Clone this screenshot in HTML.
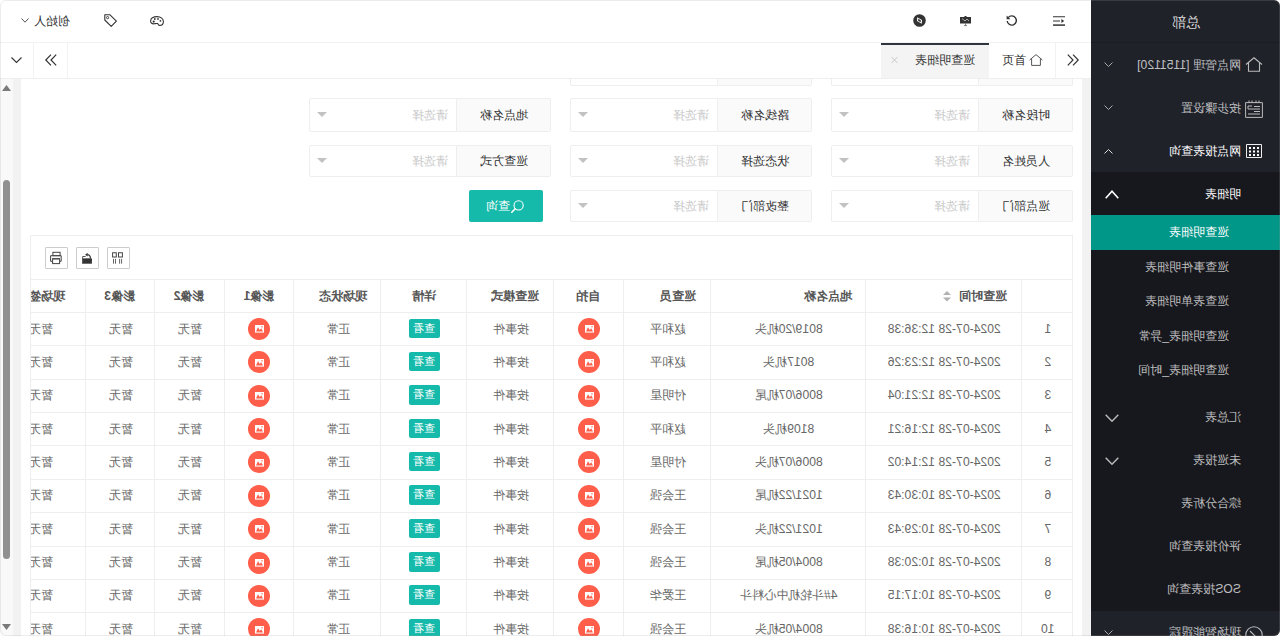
<!DOCTYPE html>
<html><head><meta charset="utf-8">
<style>
html,body{margin:0;padding:0;background:#fff;overflow:hidden;}
body{width:1280px;height:636px;}
#root{position:relative;width:1280px;height:636px;overflow:hidden;transform:scaleX(-1);font-family:"Liberation Sans",sans-serif;font-size:12.2px;color:#333;background:#fff;}
.a{position:absolute;white-space:nowrap;}
svg{position:absolute;overflow:visible;}
/* sidebar */
#side{position:absolute;left:0;top:0;width:189px;height:636px;background:#20222a;overflow:hidden;}
#side .t{position:absolute;white-space:nowrap;color:rgba(255,255,255,.72);line-height:16px;}
#sub{position:absolute;left:0;top:172px;width:189px;height:438.5px;background:#17181d;}
#act{position:absolute;left:0;top:215px;width:189px;height:34.5px;background:#009688;}
/* header */
#hdr{position:absolute;left:189px;top:0;width:1091px;height:42px;background:#fff;border-bottom:1px solid #f2f2f2;}
#tabs{position:absolute;left:189px;top:43px;width:1091px;height:35px;background:#fff;border-bottom:1px solid #eee;}
#main{position:absolute;left:189px;top:79px;width:1091px;height:557px;background:#f2f2f2;}
</style></head><body>
<div id="root">
 <div id="side">
  <div class="a" style="left:0;top:0;width:189px;height:42px;border-bottom:1px solid #1b1d23;"></div>
  <div class="t" style="left:0;width:189px;text-align:center;top:14.5px;color:#dcdcdc;font-size:13.6px;">总部</div>
  <!-- item1 -->
  <svg style="left:17px;top:57px" width="18" height="15" viewBox="0 0 18 15"><path d="M1 7.5 L9 0.8 L17 7.5 M3.5 5.5 V14.3 H14.5 V5.5" fill="none" stroke="#bbb" stroke-width="1.1"/></svg>
  <div class="t" style="left:39px;top:57px;">网点管理 [1151120]</div>
  <svg style="left:167px;top:62px" width="9" height="5" viewBox="0 0 9 5"><path d="M0.5 0.5 L4.5 4.5 L8.5 0.5" fill="none" stroke="#aaa" stroke-width="1"/></svg>
  <!-- item2 -->
  <svg style="left:17px;top:100px" width="18" height="18" viewBox="0 0 18 18"><path d="M0.6 2.6 H17.4 V17.4 H0.6 Z M4 0.5 V3 M7 0.5 V3 M11 0.5 V3 M14 0.5 V3 M3 6.5 H9 M3 9 H15 M3 11.5 H9 M3 14 H15 M11 6 H15 V9" fill="none" stroke="#bbb" stroke-width="1"/></svg>
  <div class="t" style="left:39px;top:100px;">按步骤设置</div>
  <svg style="left:167px;top:105px" width="9" height="5" viewBox="0 0 9 5"><path d="M0.5 0.5 L4.5 4.5 L8.5 0.5" fill="none" stroke="#aaa" stroke-width="1"/></svg>
  <!-- item3 -->
  <svg style="left:18px;top:144px" width="16" height="14" viewBox="0 0 16 14"><path d="M0.5 0.5 H15.5 V13.5 H0.5 Z" fill="none" stroke="#eee" stroke-width="1"/><g fill="#fff"><rect x="3" y="3" width="2" height="2"/><rect x="7" y="3" width="2" height="2"/><rect x="11" y="3" width="2" height="2"/><rect x="3" y="6.5" width="2" height="2"/><rect x="7" y="6.5" width="2" height="2"/><rect x="11" y="6.5" width="2" height="2"/><rect x="3" y="10" width="2" height="2"/><rect x="7" y="10" width="2" height="2"/><rect x="11" y="10" width="2" height="2"/></g></svg>
  <div class="t" style="left:39px;top:143px;color:#fff;">网点报表查询</div>
  <svg style="left:167px;top:149px" width="9" height="5" viewBox="0 0 9 5"><path d="M0.5 4.5 L4.5 0.5 L8.5 4.5" fill="none" stroke="#ddd" stroke-width="1"/></svg>
  <div id="sub"></div>
  <div class="t" style="left:39px;top:186px;color:#fff;">明细表</div>
  <svg style="left:161px;top:190px" width="14" height="9" viewBox="0 0 14 9"><path d="M0.7 8.3 L7 1.2 L13.3 8.3" fill="none" stroke="#fff" stroke-width="1.6"/></svg>
  <div id="act"></div>
  <div class="t" style="left:51px;top:224px;color:#fff;">巡查明细表</div>
  <div class="t" style="left:51px;top:259px;">巡查事件明细表</div>
  <div class="t" style="left:51px;top:293px;">巡查表单明细表</div>
  <div class="t" style="left:51px;top:328px;">巡查明细表_异常</div>
  <div class="t" style="left:51px;top:362px;">巡查明细表_时间</div>
  <div class="t" style="left:39px;top:409px;">汇总表</div>
  <svg style="left:161px;top:414px" width="14" height="8" viewBox="0 0 14 8"><path d="M0.7 0.7 L7 7.3 L13.3 0.7" fill="none" stroke="#bbb" stroke-width="1.4"/></svg>
  <div class="t" style="left:39px;top:452px;">未巡报表</div>
  <svg style="left:161px;top:457px" width="14" height="8" viewBox="0 0 14 8"><path d="M0.7 0.7 L7 7.3 L13.3 0.7" fill="none" stroke="#bbb" stroke-width="1.4"/></svg>
  <div class="t" style="left:39px;top:495px;">综合分析表</div>
  <div class="t" style="left:39px;top:538px;">评价报表查询</div>
  <div class="t" style="left:39px;top:581px;">SOS报表查询</div>
  <svg style="left:17px;top:626px" width="18" height="18" viewBox="0 0 18 18"><circle cx="9" cy="9" r="8.2" fill="none" stroke="#bbb" stroke-width="1.1"/><path d="M13 5 L5 13" stroke="#bbb" stroke-width="1.1"/></svg>
  <div class="t" style="left:39px;top:624px;">现场智能跟踪</div>
  <svg style="left:167px;top:630px" width="9" height="5" viewBox="0 0 9 5"><path d="M0.5 0.5 L4.5 4.5 L8.5 0.5" fill="none" stroke="#aaa" stroke-width="1"/></svg>
 </div>
 <div id="main"></div><!--MAIN--><div class="a" style="left:189px;top:79px;width:1091px;height:557px;background:#f2f2f2;"></div><div class="a" style="left:198px;top:79px;width:1061px;height:557px;background:#fff;"></div><div class="a" style="left:1267px;top:79px;width:13px;height:557px;background:#f9f9f9;"></div><div class="a" style="left:1270px;top:180px;width:7px;height:379px;background:#909090;border-radius:4px;"></div><svg style="left:1269px;top:85px" width="9" height="6" viewBox="0 0 9 6"><path d="M4.5 0 L9 6 H0 Z" fill="#7a7a7a"/></svg><svg style="left:1269px;top:624px" width="9" height="6" viewBox="0 0 9 6"><path d="M0 0 H9 L4.5 6 Z" fill="#7a7a7a"/></svg><div class="a" style="left:206.5px;top:52px;width:93.5px;height:32px;background:#fafafa;border:1px solid #eee;border-right:none;border-radius:2px 0 0 2px;"></div><div class="a" style="left:301.0px;top:52px;width:146px;height:32px;background:#fff;border:1px solid #eee;border-radius:0 2px 2px 0;"></div><div class="a" style="left:467.5px;top:52px;width:93.5px;height:32px;background:#fafafa;border:1px solid #eee;border-right:none;border-radius:2px 0 0 2px;"></div><div class="a" style="left:562.0px;top:52px;width:146px;height:32px;background:#fff;border:1px solid #eee;border-radius:0 2px 2px 0;"></div><div class="a" style="left:206.5px;top:98px;width:93.5px;height:32px;background:#fafafa;border:1px solid #eee;border-right:none;border-radius:2px 0 0 2px;"></div><div class="a" style="left:301.0px;top:98px;width:146px;height:32px;background:#fff;border:1px solid #eee;border-radius:0 2px 2px 0;"></div><div class="a" style="left:206.5px;top:107.0px;width:94.5px;text-align:center;line-height:16px;color:#333;">时段名称</div><div class="a" style="left:310.5px;top:107.0px;line-height:16px;color:#c9c9c9;">请选择</div><svg style="left:431.0px;top:112.0px" width="10" height="5" viewBox="0 0 10 5"><path d="M0 0 H10 L5 5 Z" fill="#c2c2c2"/></svg><div class="a" style="left:467.5px;top:98px;width:93.5px;height:32px;background:#fafafa;border:1px solid #eee;border-right:none;border-radius:2px 0 0 2px;"></div><div class="a" style="left:562.0px;top:98px;width:146px;height:32px;background:#fff;border:1px solid #eee;border-radius:0 2px 2px 0;"></div><div class="a" style="left:467.5px;top:107.0px;width:94.5px;text-align:center;line-height:16px;color:#333;">路线名称</div><div class="a" style="left:571.5px;top:107.0px;line-height:16px;color:#c9c9c9;">请选择</div><svg style="left:692.0px;top:112.0px" width="10" height="5" viewBox="0 0 10 5"><path d="M0 0 H10 L5 5 Z" fill="#c2c2c2"/></svg><div class="a" style="left:728.5px;top:98px;width:93.5px;height:32px;background:#fafafa;border:1px solid #eee;border-right:none;border-radius:2px 0 0 2px;"></div><div class="a" style="left:823.0px;top:98px;width:146px;height:32px;background:#fff;border:1px solid #eee;border-radius:0 2px 2px 0;"></div><div class="a" style="left:728.5px;top:107.0px;width:94.5px;text-align:center;line-height:16px;color:#333;">地点名称</div><div class="a" style="left:832.5px;top:107.0px;line-height:16px;color:#c9c9c9;">请选择</div><svg style="left:953.0px;top:112.0px" width="10" height="5" viewBox="0 0 10 5"><path d="M0 0 H10 L5 5 Z" fill="#c2c2c2"/></svg><div class="a" style="left:206.5px;top:144.5px;width:93.5px;height:30px;background:#fafafa;border:1px solid #eee;border-right:none;border-radius:2px 0 0 2px;"></div><div class="a" style="left:301.0px;top:144.5px;width:146px;height:30px;background:#fff;border:1px solid #eee;border-radius:0 2px 2px 0;"></div><div class="a" style="left:206.5px;top:152.5px;width:94.5px;text-align:center;line-height:16px;color:#333;">人员姓名</div><div class="a" style="left:310.5px;top:152.5px;line-height:16px;color:#c9c9c9;">请选择</div><svg style="left:431.0px;top:157.5px" width="10" height="5" viewBox="0 0 10 5"><path d="M0 0 H10 L5 5 Z" fill="#c2c2c2"/></svg><div class="a" style="left:467.5px;top:144.5px;width:93.5px;height:30px;background:#fafafa;border:1px solid #eee;border-right:none;border-radius:2px 0 0 2px;"></div><div class="a" style="left:562.0px;top:144.5px;width:146px;height:30px;background:#fff;border:1px solid #eee;border-radius:0 2px 2px 0;"></div><div class="a" style="left:467.5px;top:152.5px;width:94.5px;text-align:center;line-height:16px;color:#333;">状态选择</div><div class="a" style="left:571.5px;top:152.5px;line-height:16px;color:#c9c9c9;">请选择</div><svg style="left:692.0px;top:157.5px" width="10" height="5" viewBox="0 0 10 5"><path d="M0 0 H10 L5 5 Z" fill="#c2c2c2"/></svg><div class="a" style="left:728.5px;top:144.5px;width:93.5px;height:30px;background:#fafafa;border:1px solid #eee;border-right:none;border-radius:2px 0 0 2px;"></div><div class="a" style="left:823.0px;top:144.5px;width:146px;height:30px;background:#fff;border:1px solid #eee;border-radius:0 2px 2px 0;"></div><div class="a" style="left:728.5px;top:152.5px;width:94.5px;text-align:center;line-height:16px;color:#333;">巡查方式</div><div class="a" style="left:832.5px;top:152.5px;line-height:16px;color:#c9c9c9;">请选择</div><svg style="left:953.0px;top:157.5px" width="10" height="5" viewBox="0 0 10 5"><path d="M0 0 H10 L5 5 Z" fill="#c2c2c2"/></svg><div class="a" style="left:206.5px;top:190.2px;width:93.5px;height:29.6px;background:#fafafa;border:1px solid #eee;border-right:none;border-radius:2px 0 0 2px;"></div><div class="a" style="left:301.0px;top:190.2px;width:146px;height:29.6px;background:#fff;border:1px solid #eee;border-radius:0 2px 2px 0;"></div><div class="a" style="left:206.5px;top:198.0px;width:94.5px;text-align:center;line-height:16px;color:#333;">巡点部门</div><div class="a" style="left:310.5px;top:198.0px;line-height:16px;color:#c9c9c9;">请选择</div><svg style="left:431.0px;top:203.0px" width="10" height="5" viewBox="0 0 10 5"><path d="M0 0 H10 L5 5 Z" fill="#c2c2c2"/></svg><div class="a" style="left:467.5px;top:190.2px;width:93.5px;height:29.6px;background:#fafafa;border:1px solid #eee;border-right:none;border-radius:2px 0 0 2px;"></div><div class="a" style="left:562.0px;top:190.2px;width:146px;height:29.6px;background:#fff;border:1px solid #eee;border-radius:0 2px 2px 0;"></div><div class="a" style="left:467.5px;top:198.0px;width:94.5px;text-align:center;line-height:16px;color:#333;">整改部门</div><div class="a" style="left:571.5px;top:198.0px;line-height:16px;color:#c9c9c9;">请选择</div><svg style="left:692.0px;top:203.0px" width="10" height="5" viewBox="0 0 10 5"><path d="M0 0 H10 L5 5 Z" fill="#c2c2c2"/></svg><div class="a" style="left:737px;top:190px;width:74px;height:32px;background:#16baaa;border-radius:2px;"></div><svg style="left:755.5px;top:200px" width="13" height="13" viewBox="0 0 13 13"><circle cx="5.4" cy="5.4" r="4.6" fill="none" stroke="#fff" stroke-width="1.1"/><path d="M8.8 8.8 L12.2 12.2" stroke="#fff" stroke-width="1.6" stroke-linecap="round"/></svg><div class="a" style="left:770px;top:198px;line-height:16px;color:#fff;">查询</div><div class="a" style="left:206.5px;top:235px;width:1043.5px;height:401px;overflow:hidden;"><div class="a" style="left:0;top:0;width:1100px;height:1px;background:#eee;"></div><div class="a" style="left:0;top:0;width:1px;height:401px;background:#eee;"></div><div class="a" style="left:1042.5px;top:0;width:1px;height:401px;background:#eee;z-index:2;"></div><div class="a" style="left:943.8px;top:12px;width:21px;height:20px;border:1px solid #ccc;border-radius:1px;"></div><div class="a" style="left:974.75px;top:12px;width:21px;height:20px;border:1px solid #ccc;border-radius:1px;"></div><div class="a" style="left:1005.7px;top:12px;width:21px;height:20px;border:1px solid #ccc;border-radius:1px;"></div><svg style="left:1010.5px;top:15px" width="14" height="15" viewBox="0 0 14 15"><g transform="translate(14,0) scale(-1,1)"><rect x="3.9" y="2.3" width="7.2" height="3.4" fill="none" stroke="#444" stroke-width="1"/><path d="M3.4 11.3 H1.6 V5.7 H12.2 V11.3 H10.6" fill="none" stroke="#444" stroke-width="1"/><rect x="3.6" y="8.6" width="7" height="5" fill="none" stroke="#444" stroke-width="1"/><path d="M3.6 8.9 H10.6" stroke="#555" stroke-width="1.3"/></g></svg><svg style="left:979.5px;top:16px" width="13" height="13" viewBox="0 0 13 13"><g transform="translate(13,0) scale(-1,1)"><path d="M1.2 7.4 H10.9 V12.7 H1.2 Z" fill="#333"/><path d="M1.7 12.5 V5.5 H4.6" fill="none" stroke="#555" stroke-width="1"/><path d="M4.4 8.3 H9.7 L10.9 9.3" fill="none" stroke="#333" stroke-width="1"/><path d="M9.4 7.6 C9.4 4.8 8.2 3.7 6.3 3.7" fill="none" stroke="#333" stroke-width="1.2"/><path d="M4.1 3.7 L6.6 1.8 L6.6 5.6 Z" fill="#333"/></g></svg><svg style="left:949.5px;top:16px" width="13" height="14" viewBox="0 0 13 14"><g transform="translate(13,0) scale(-1,1)"><rect x="1.6" y="1.75" width="3.7" height="4.25" fill="none" stroke="#444" stroke-width="1"/><rect x="7.5" y="1.75" width="3.9" height="4.25" fill="none" stroke="#444" stroke-width="1"/><path d="M2.5 7.9 V12.7 M4.5 7.9 V12.7 M8.6 7.9 V12.7 M10.6 7.9 V12.7" stroke="#555" stroke-width="0.9"/></g></svg><div class="a" style="left:0;top:44px;width:1100px;height:1px;background:#eee;"></div><div class="a" style="left:0;top:77.00px;width:1100px;height:1px;background:#eee;"></div><div class="a" style="left:0;top:110.36px;width:1100px;height:1px;background:#eee;"></div><div class="a" style="left:0;top:143.72px;width:1100px;height:1px;background:#eee;"></div><div class="a" style="left:0;top:177.08px;width:1100px;height:1px;background:#eee;"></div><div class="a" style="left:0;top:210.44px;width:1100px;height:1px;background:#eee;"></div><div class="a" style="left:0;top:243.80px;width:1100px;height:1px;background:#eee;"></div><div class="a" style="left:0;top:277.16px;width:1100px;height:1px;background:#eee;"></div><div class="a" style="left:0;top:310.52px;width:1100px;height:1px;background:#eee;"></div><div class="a" style="left:0;top:343.88px;width:1100px;height:1px;background:#eee;"></div><div class="a" style="left:0;top:377.24px;width:1100px;height:1px;background:#eee;"></div><div class="a" style="left:0;top:410.60px;width:1100px;height:1px;background:#eee;"></div><div class="a" style="left:51.60px;top:44px;width:1px;height:400px;background:#eee;"></div><div class="a" style="left:207.00px;top:44px;width:1px;height:400px;background:#eee;"></div><div class="a" style="left:362.70px;top:44px;width:1px;height:400px;background:#eee;"></div><div class="a" style="left:449.20px;top:44px;width:1px;height:400px;background:#eee;"></div><div class="a" style="left:519.20px;top:44px;width:1px;height:400px;background:#eee;"></div><div class="a" style="left:606.40px;top:44px;width:1px;height:400px;background:#eee;"></div><div class="a" style="left:692.10px;top:44px;width:1px;height:400px;background:#eee;"></div><div class="a" style="left:779.30px;top:44px;width:1px;height:400px;background:#eee;"></div><div class="a" style="left:848.70px;top:44px;width:1px;height:400px;background:#eee;"></div><div class="a" style="left:918.30px;top:44px;width:1px;height:400px;background:#eee;"></div><div class="a" style="left:987.70px;top:44px;width:1px;height:400px;background:#eee;"></div><div class="a" style="left:66.20px;top:53px;line-height:16px;color:#555;font-weight:bold;">巡查时间</div><div class="a" style="left:222.00px;top:53px;line-height:16px;color:#555;font-weight:bold;">地点名称</div><div class="a" style="left:377.80px;top:53px;line-height:16px;color:#555;font-weight:bold;">巡查员</div><div class="a" style="left:474.00px;top:53px;line-height:16px;color:#555;font-weight:bold;">自拍</div><div class="a" style="left:534.25px;top:53px;line-height:16px;color:#555;font-weight:bold;">巡查模式</div><div class="a" style="left:638.00px;top:53px;line-height:16px;color:#555;font-weight:bold;">详情</div><div class="a" style="left:706.60px;top:53px;line-height:16px;color:#555;font-weight:bold;">现场状态</div><div class="a" style="left:799.10px;top:53px;line-height:16px;color:#555;font-weight:bold;">影像1</div><div class="a" style="left:869.10px;top:53px;line-height:16px;color:#555;font-weight:bold;">影像2</div><div class="a" style="left:938.40px;top:53px;line-height:16px;color:#555;font-weight:bold;">影像3</div><div class="a" style="left:1008.10px;top:53px;line-height:16px;color:#555;font-weight:bold;">现场签名</div><svg style="left:122.40px;top:56px" width="8" height="11" viewBox="0 0 8 11"><path d="M4 0 L8 4 H0 Z M0 6.5 H8 L4 10.5 Z" fill="#b2b2b2"/></svg><div class="a" style="left:-0.10px;top:85.50px;width:51.70px;text-align:center;line-height:16px;color:#666;">1</div><div class="a" style="left:51.60px;top:85.50px;width:155.40px;text-align:center;line-height:16px;color:#666;">2024-07-28 12:36:38</div><div class="a" style="left:207.00px;top:85.50px;width:155.70px;text-align:center;line-height:16px;color:#666;">8019/20机头</div><div class="a" style="left:362.70px;top:85.50px;width:86.50px;text-align:center;line-height:16px;color:#666;">赵和平</div><div class="a" style="left:473.20px;top:83.00px;width:22px;height:22px;border-radius:50%;background:#ff5f4a;"></div><svg style="left:479.70px;top:90.30px" width="9" height="8" viewBox="0 0 9 8"><rect x="0" y="0" width="9" height="7.6" fill="#fff"/><path d="M1 6.6 L2.8 3.2 L4.2 5 L6 2.2 L8 6.6 Z" fill="#ff5f4a"/><circle cx="2" cy="1.8" r="0.7" fill="#ff5f4a"/></svg><div class="a" style="left:803.00px;top:83.00px;width:22px;height:22px;border-radius:50%;background:#ff5f4a;"></div><svg style="left:809.50px;top:90.30px" width="9" height="8" viewBox="0 0 9 8"><rect x="0" y="0" width="9" height="7.6" fill="#fff"/><path d="M1 6.6 L2.8 3.2 L4.2 5 L6 2.2 L8 6.6 Z" fill="#ff5f4a"/><circle cx="2" cy="1.8" r="0.7" fill="#ff5f4a"/></svg><div class="a" style="left:519.20px;top:85.50px;width:87.20px;text-align:center;line-height:16px;color:#666;">按事件</div><div class="a" style="left:633.75px;top:83.50px;width:31px;height:19.5px;background:#16baaa;border-radius:2px;color:#fff;font-size:11px;line-height:19.5px;text-align:center;">查看</div><div class="a" style="left:692.10px;top:85.50px;width:87.20px;text-align:center;line-height:16px;color:#666;">正常</div><div class="a" style="left:848.70px;top:85.50px;width:69.60px;text-align:center;line-height:16px;color:#666;">暂无</div><div class="a" style="left:918.30px;top:85.50px;width:69.40px;text-align:center;line-height:16px;color:#666;">暂无</div><div class="a" style="left:987.70px;top:85.50px;width:89.80px;text-align:center;line-height:16px;color:#666;">暂无</div><div class="a" style="left:-0.10px;top:118.86px;width:51.70px;text-align:center;line-height:16px;color:#666;">2</div><div class="a" style="left:51.60px;top:118.86px;width:155.40px;text-align:center;line-height:16px;color:#666;">2024-07-28 12:23:26</div><div class="a" style="left:207.00px;top:118.86px;width:155.70px;text-align:center;line-height:16px;color:#666;">8017机头</div><div class="a" style="left:362.70px;top:118.86px;width:86.50px;text-align:center;line-height:16px;color:#666;">赵和平</div><div class="a" style="left:473.20px;top:116.36px;width:22px;height:22px;border-radius:50%;background:#ff5f4a;"></div><svg style="left:479.70px;top:123.66px" width="9" height="8" viewBox="0 0 9 8"><rect x="0" y="0" width="9" height="7.6" fill="#fff"/><path d="M1 6.6 L2.8 3.2 L4.2 5 L6 2.2 L8 6.6 Z" fill="#ff5f4a"/><circle cx="2" cy="1.8" r="0.7" fill="#ff5f4a"/></svg><div class="a" style="left:803.00px;top:116.36px;width:22px;height:22px;border-radius:50%;background:#ff5f4a;"></div><svg style="left:809.50px;top:123.66px" width="9" height="8" viewBox="0 0 9 8"><rect x="0" y="0" width="9" height="7.6" fill="#fff"/><path d="M1 6.6 L2.8 3.2 L4.2 5 L6 2.2 L8 6.6 Z" fill="#ff5f4a"/><circle cx="2" cy="1.8" r="0.7" fill="#ff5f4a"/></svg><div class="a" style="left:519.20px;top:118.86px;width:87.20px;text-align:center;line-height:16px;color:#666;">按事件</div><div class="a" style="left:633.75px;top:116.86px;width:31px;height:19.5px;background:#16baaa;border-radius:2px;color:#fff;font-size:11px;line-height:19.5px;text-align:center;">查看</div><div class="a" style="left:692.10px;top:118.86px;width:87.20px;text-align:center;line-height:16px;color:#666;">正常</div><div class="a" style="left:848.70px;top:118.86px;width:69.60px;text-align:center;line-height:16px;color:#666;">暂无</div><div class="a" style="left:918.30px;top:118.86px;width:69.40px;text-align:center;line-height:16px;color:#666;">暂无</div><div class="a" style="left:987.70px;top:118.86px;width:89.80px;text-align:center;line-height:16px;color:#666;">暂无</div><div class="a" style="left:-0.10px;top:152.22px;width:51.70px;text-align:center;line-height:16px;color:#666;">3</div><div class="a" style="left:51.60px;top:152.22px;width:155.40px;text-align:center;line-height:16px;color:#666;">2024-07-28 12:21:04</div><div class="a" style="left:207.00px;top:152.22px;width:155.70px;text-align:center;line-height:16px;color:#666;">8006/07机尾</div><div class="a" style="left:362.70px;top:152.22px;width:86.50px;text-align:center;line-height:16px;color:#666;">付明星</div><div class="a" style="left:473.20px;top:149.72px;width:22px;height:22px;border-radius:50%;background:#ff5f4a;"></div><svg style="left:479.70px;top:157.02px" width="9" height="8" viewBox="0 0 9 8"><rect x="0" y="0" width="9" height="7.6" fill="#fff"/><path d="M1 6.6 L2.8 3.2 L4.2 5 L6 2.2 L8 6.6 Z" fill="#ff5f4a"/><circle cx="2" cy="1.8" r="0.7" fill="#ff5f4a"/></svg><div class="a" style="left:803.00px;top:149.72px;width:22px;height:22px;border-radius:50%;background:#ff5f4a;"></div><svg style="left:809.50px;top:157.02px" width="9" height="8" viewBox="0 0 9 8"><rect x="0" y="0" width="9" height="7.6" fill="#fff"/><path d="M1 6.6 L2.8 3.2 L4.2 5 L6 2.2 L8 6.6 Z" fill="#ff5f4a"/><circle cx="2" cy="1.8" r="0.7" fill="#ff5f4a"/></svg><div class="a" style="left:519.20px;top:152.22px;width:87.20px;text-align:center;line-height:16px;color:#666;">按事件</div><div class="a" style="left:633.75px;top:150.22px;width:31px;height:19.5px;background:#16baaa;border-radius:2px;color:#fff;font-size:11px;line-height:19.5px;text-align:center;">查看</div><div class="a" style="left:692.10px;top:152.22px;width:87.20px;text-align:center;line-height:16px;color:#666;">正常</div><div class="a" style="left:848.70px;top:152.22px;width:69.60px;text-align:center;line-height:16px;color:#666;">暂无</div><div class="a" style="left:918.30px;top:152.22px;width:69.40px;text-align:center;line-height:16px;color:#666;">暂无</div><div class="a" style="left:987.70px;top:152.22px;width:89.80px;text-align:center;line-height:16px;color:#666;">暂无</div><div class="a" style="left:-0.10px;top:185.58px;width:51.70px;text-align:center;line-height:16px;color:#666;">4</div><div class="a" style="left:51.60px;top:185.58px;width:155.40px;text-align:center;line-height:16px;color:#666;">2024-07-28 12:16:21</div><div class="a" style="left:207.00px;top:185.58px;width:155.70px;text-align:center;line-height:16px;color:#666;">8109机头</div><div class="a" style="left:362.70px;top:185.58px;width:86.50px;text-align:center;line-height:16px;color:#666;">赵和平</div><div class="a" style="left:473.20px;top:183.08px;width:22px;height:22px;border-radius:50%;background:#ff5f4a;"></div><svg style="left:479.70px;top:190.38px" width="9" height="8" viewBox="0 0 9 8"><rect x="0" y="0" width="9" height="7.6" fill="#fff"/><path d="M1 6.6 L2.8 3.2 L4.2 5 L6 2.2 L8 6.6 Z" fill="#ff5f4a"/><circle cx="2" cy="1.8" r="0.7" fill="#ff5f4a"/></svg><div class="a" style="left:803.00px;top:183.08px;width:22px;height:22px;border-radius:50%;background:#ff5f4a;"></div><svg style="left:809.50px;top:190.38px" width="9" height="8" viewBox="0 0 9 8"><rect x="0" y="0" width="9" height="7.6" fill="#fff"/><path d="M1 6.6 L2.8 3.2 L4.2 5 L6 2.2 L8 6.6 Z" fill="#ff5f4a"/><circle cx="2" cy="1.8" r="0.7" fill="#ff5f4a"/></svg><div class="a" style="left:519.20px;top:185.58px;width:87.20px;text-align:center;line-height:16px;color:#666;">按事件</div><div class="a" style="left:633.75px;top:183.58px;width:31px;height:19.5px;background:#16baaa;border-radius:2px;color:#fff;font-size:11px;line-height:19.5px;text-align:center;">查看</div><div class="a" style="left:692.10px;top:185.58px;width:87.20px;text-align:center;line-height:16px;color:#666;">正常</div><div class="a" style="left:848.70px;top:185.58px;width:69.60px;text-align:center;line-height:16px;color:#666;">暂无</div><div class="a" style="left:918.30px;top:185.58px;width:69.40px;text-align:center;line-height:16px;color:#666;">暂无</div><div class="a" style="left:987.70px;top:185.58px;width:89.80px;text-align:center;line-height:16px;color:#666;">暂无</div><div class="a" style="left:-0.10px;top:218.94px;width:51.70px;text-align:center;line-height:16px;color:#666;">5</div><div class="a" style="left:51.60px;top:218.94px;width:155.40px;text-align:center;line-height:16px;color:#666;">2024-07-28 12:14:02</div><div class="a" style="left:207.00px;top:218.94px;width:155.70px;text-align:center;line-height:16px;color:#666;">8006/07机头</div><div class="a" style="left:362.70px;top:218.94px;width:86.50px;text-align:center;line-height:16px;color:#666;">付明星</div><div class="a" style="left:473.20px;top:216.44px;width:22px;height:22px;border-radius:50%;background:#ff5f4a;"></div><svg style="left:479.70px;top:223.74px" width="9" height="8" viewBox="0 0 9 8"><rect x="0" y="0" width="9" height="7.6" fill="#fff"/><path d="M1 6.6 L2.8 3.2 L4.2 5 L6 2.2 L8 6.6 Z" fill="#ff5f4a"/><circle cx="2" cy="1.8" r="0.7" fill="#ff5f4a"/></svg><div class="a" style="left:803.00px;top:216.44px;width:22px;height:22px;border-radius:50%;background:#ff5f4a;"></div><svg style="left:809.50px;top:223.74px" width="9" height="8" viewBox="0 0 9 8"><rect x="0" y="0" width="9" height="7.6" fill="#fff"/><path d="M1 6.6 L2.8 3.2 L4.2 5 L6 2.2 L8 6.6 Z" fill="#ff5f4a"/><circle cx="2" cy="1.8" r="0.7" fill="#ff5f4a"/></svg><div class="a" style="left:519.20px;top:218.94px;width:87.20px;text-align:center;line-height:16px;color:#666;">按事件</div><div class="a" style="left:633.75px;top:216.94px;width:31px;height:19.5px;background:#16baaa;border-radius:2px;color:#fff;font-size:11px;line-height:19.5px;text-align:center;">查看</div><div class="a" style="left:692.10px;top:218.94px;width:87.20px;text-align:center;line-height:16px;color:#666;">正常</div><div class="a" style="left:848.70px;top:218.94px;width:69.60px;text-align:center;line-height:16px;color:#666;">暂无</div><div class="a" style="left:918.30px;top:218.94px;width:69.40px;text-align:center;line-height:16px;color:#666;">暂无</div><div class="a" style="left:987.70px;top:218.94px;width:89.80px;text-align:center;line-height:16px;color:#666;">暂无</div><div class="a" style="left:-0.10px;top:252.30px;width:51.70px;text-align:center;line-height:16px;color:#666;">6</div><div class="a" style="left:51.60px;top:252.30px;width:155.40px;text-align:center;line-height:16px;color:#666;">2024-07-28 10:30:43</div><div class="a" style="left:207.00px;top:252.30px;width:155.70px;text-align:center;line-height:16px;color:#666;">1021/22机尾</div><div class="a" style="left:362.70px;top:252.30px;width:86.50px;text-align:center;line-height:16px;color:#666;">王会强</div><div class="a" style="left:473.20px;top:249.80px;width:22px;height:22px;border-radius:50%;background:#ff5f4a;"></div><svg style="left:479.70px;top:257.10px" width="9" height="8" viewBox="0 0 9 8"><rect x="0" y="0" width="9" height="7.6" fill="#fff"/><path d="M1 6.6 L2.8 3.2 L4.2 5 L6 2.2 L8 6.6 Z" fill="#ff5f4a"/><circle cx="2" cy="1.8" r="0.7" fill="#ff5f4a"/></svg><div class="a" style="left:803.00px;top:249.80px;width:22px;height:22px;border-radius:50%;background:#ff5f4a;"></div><svg style="left:809.50px;top:257.10px" width="9" height="8" viewBox="0 0 9 8"><rect x="0" y="0" width="9" height="7.6" fill="#fff"/><path d="M1 6.6 L2.8 3.2 L4.2 5 L6 2.2 L8 6.6 Z" fill="#ff5f4a"/><circle cx="2" cy="1.8" r="0.7" fill="#ff5f4a"/></svg><div class="a" style="left:519.20px;top:252.30px;width:87.20px;text-align:center;line-height:16px;color:#666;">按事件</div><div class="a" style="left:633.75px;top:250.30px;width:31px;height:19.5px;background:#16baaa;border-radius:2px;color:#fff;font-size:11px;line-height:19.5px;text-align:center;">查看</div><div class="a" style="left:692.10px;top:252.30px;width:87.20px;text-align:center;line-height:16px;color:#666;">正常</div><div class="a" style="left:848.70px;top:252.30px;width:69.60px;text-align:center;line-height:16px;color:#666;">暂无</div><div class="a" style="left:918.30px;top:252.30px;width:69.40px;text-align:center;line-height:16px;color:#666;">暂无</div><div class="a" style="left:987.70px;top:252.30px;width:89.80px;text-align:center;line-height:16px;color:#666;">暂无</div><div class="a" style="left:-0.10px;top:285.66px;width:51.70px;text-align:center;line-height:16px;color:#666;">7</div><div class="a" style="left:51.60px;top:285.66px;width:155.40px;text-align:center;line-height:16px;color:#666;">2024-07-28 10:29:43</div><div class="a" style="left:207.00px;top:285.66px;width:155.70px;text-align:center;line-height:16px;color:#666;">1021/22机头</div><div class="a" style="left:362.70px;top:285.66px;width:86.50px;text-align:center;line-height:16px;color:#666;">王会强</div><div class="a" style="left:473.20px;top:283.16px;width:22px;height:22px;border-radius:50%;background:#ff5f4a;"></div><svg style="left:479.70px;top:290.46px" width="9" height="8" viewBox="0 0 9 8"><rect x="0" y="0" width="9" height="7.6" fill="#fff"/><path d="M1 6.6 L2.8 3.2 L4.2 5 L6 2.2 L8 6.6 Z" fill="#ff5f4a"/><circle cx="2" cy="1.8" r="0.7" fill="#ff5f4a"/></svg><div class="a" style="left:803.00px;top:283.16px;width:22px;height:22px;border-radius:50%;background:#ff5f4a;"></div><svg style="left:809.50px;top:290.46px" width="9" height="8" viewBox="0 0 9 8"><rect x="0" y="0" width="9" height="7.6" fill="#fff"/><path d="M1 6.6 L2.8 3.2 L4.2 5 L6 2.2 L8 6.6 Z" fill="#ff5f4a"/><circle cx="2" cy="1.8" r="0.7" fill="#ff5f4a"/></svg><div class="a" style="left:519.20px;top:285.66px;width:87.20px;text-align:center;line-height:16px;color:#666;">按事件</div><div class="a" style="left:633.75px;top:283.66px;width:31px;height:19.5px;background:#16baaa;border-radius:2px;color:#fff;font-size:11px;line-height:19.5px;text-align:center;">查看</div><div class="a" style="left:692.10px;top:285.66px;width:87.20px;text-align:center;line-height:16px;color:#666;">正常</div><div class="a" style="left:848.70px;top:285.66px;width:69.60px;text-align:center;line-height:16px;color:#666;">暂无</div><div class="a" style="left:918.30px;top:285.66px;width:69.40px;text-align:center;line-height:16px;color:#666;">暂无</div><div class="a" style="left:987.70px;top:285.66px;width:89.80px;text-align:center;line-height:16px;color:#666;">暂无</div><div class="a" style="left:-0.10px;top:319.02px;width:51.70px;text-align:center;line-height:16px;color:#666;">8</div><div class="a" style="left:51.60px;top:319.02px;width:155.40px;text-align:center;line-height:16px;color:#666;">2024-07-28 10:20:38</div><div class="a" style="left:207.00px;top:319.02px;width:155.70px;text-align:center;line-height:16px;color:#666;">8004/05机尾</div><div class="a" style="left:362.70px;top:319.02px;width:86.50px;text-align:center;line-height:16px;color:#666;">王会强</div><div class="a" style="left:473.20px;top:316.52px;width:22px;height:22px;border-radius:50%;background:#ff5f4a;"></div><svg style="left:479.70px;top:323.82px" width="9" height="8" viewBox="0 0 9 8"><rect x="0" y="0" width="9" height="7.6" fill="#fff"/><path d="M1 6.6 L2.8 3.2 L4.2 5 L6 2.2 L8 6.6 Z" fill="#ff5f4a"/><circle cx="2" cy="1.8" r="0.7" fill="#ff5f4a"/></svg><div class="a" style="left:803.00px;top:316.52px;width:22px;height:22px;border-radius:50%;background:#ff5f4a;"></div><svg style="left:809.50px;top:323.82px" width="9" height="8" viewBox="0 0 9 8"><rect x="0" y="0" width="9" height="7.6" fill="#fff"/><path d="M1 6.6 L2.8 3.2 L4.2 5 L6 2.2 L8 6.6 Z" fill="#ff5f4a"/><circle cx="2" cy="1.8" r="0.7" fill="#ff5f4a"/></svg><div class="a" style="left:519.20px;top:319.02px;width:87.20px;text-align:center;line-height:16px;color:#666;">按事件</div><div class="a" style="left:633.75px;top:317.02px;width:31px;height:19.5px;background:#16baaa;border-radius:2px;color:#fff;font-size:11px;line-height:19.5px;text-align:center;">查看</div><div class="a" style="left:692.10px;top:319.02px;width:87.20px;text-align:center;line-height:16px;color:#666;">正常</div><div class="a" style="left:848.70px;top:319.02px;width:69.60px;text-align:center;line-height:16px;color:#666;">暂无</div><div class="a" style="left:918.30px;top:319.02px;width:69.40px;text-align:center;line-height:16px;color:#666;">暂无</div><div class="a" style="left:987.70px;top:319.02px;width:89.80px;text-align:center;line-height:16px;color:#666;">暂无</div><div class="a" style="left:-0.10px;top:352.38px;width:51.70px;text-align:center;line-height:16px;color:#666;">9</div><div class="a" style="left:51.60px;top:352.38px;width:155.40px;text-align:center;line-height:16px;color:#666;">2024-07-28 10:17:15</div><div class="a" style="left:207.00px;top:352.38px;width:155.70px;text-align:center;line-height:16px;color:#666;">4#斗轮机中心料斗</div><div class="a" style="left:362.70px;top:352.38px;width:86.50px;text-align:center;line-height:16px;color:#666;">王爱华</div><div class="a" style="left:473.20px;top:349.88px;width:22px;height:22px;border-radius:50%;background:#ff5f4a;"></div><svg style="left:479.70px;top:357.18px" width="9" height="8" viewBox="0 0 9 8"><rect x="0" y="0" width="9" height="7.6" fill="#fff"/><path d="M1 6.6 L2.8 3.2 L4.2 5 L6 2.2 L8 6.6 Z" fill="#ff5f4a"/><circle cx="2" cy="1.8" r="0.7" fill="#ff5f4a"/></svg><div class="a" style="left:803.00px;top:349.88px;width:22px;height:22px;border-radius:50%;background:#ff5f4a;"></div><svg style="left:809.50px;top:357.18px" width="9" height="8" viewBox="0 0 9 8"><rect x="0" y="0" width="9" height="7.6" fill="#fff"/><path d="M1 6.6 L2.8 3.2 L4.2 5 L6 2.2 L8 6.6 Z" fill="#ff5f4a"/><circle cx="2" cy="1.8" r="0.7" fill="#ff5f4a"/></svg><div class="a" style="left:519.20px;top:352.38px;width:87.20px;text-align:center;line-height:16px;color:#666;">按事件</div><div class="a" style="left:633.75px;top:350.38px;width:31px;height:19.5px;background:#16baaa;border-radius:2px;color:#fff;font-size:11px;line-height:19.5px;text-align:center;">查看</div><div class="a" style="left:692.10px;top:352.38px;width:87.20px;text-align:center;line-height:16px;color:#666;">正常</div><div class="a" style="left:848.70px;top:352.38px;width:69.60px;text-align:center;line-height:16px;color:#666;">暂无</div><div class="a" style="left:918.30px;top:352.38px;width:69.40px;text-align:center;line-height:16px;color:#666;">暂无</div><div class="a" style="left:987.70px;top:352.38px;width:89.80px;text-align:center;line-height:16px;color:#666;">暂无</div><div class="a" style="left:-0.10px;top:385.74px;width:51.70px;text-align:center;line-height:16px;color:#666;">10</div><div class="a" style="left:51.60px;top:385.74px;width:155.40px;text-align:center;line-height:16px;color:#666;">2024-07-28 10:16:38</div><div class="a" style="left:207.00px;top:385.74px;width:155.70px;text-align:center;line-height:16px;color:#666;">8004/05机头</div><div class="a" style="left:362.70px;top:385.74px;width:86.50px;text-align:center;line-height:16px;color:#666;">王会强</div><div class="a" style="left:473.20px;top:383.24px;width:22px;height:22px;border-radius:50%;background:#ff5f4a;"></div><svg style="left:479.70px;top:390.54px" width="9" height="8" viewBox="0 0 9 8"><rect x="0" y="0" width="9" height="7.6" fill="#fff"/><path d="M1 6.6 L2.8 3.2 L4.2 5 L6 2.2 L8 6.6 Z" fill="#ff5f4a"/><circle cx="2" cy="1.8" r="0.7" fill="#ff5f4a"/></svg><div class="a" style="left:803.00px;top:383.24px;width:22px;height:22px;border-radius:50%;background:#ff5f4a;"></div><svg style="left:809.50px;top:390.54px" width="9" height="8" viewBox="0 0 9 8"><rect x="0" y="0" width="9" height="7.6" fill="#fff"/><path d="M1 6.6 L2.8 3.2 L4.2 5 L6 2.2 L8 6.6 Z" fill="#ff5f4a"/><circle cx="2" cy="1.8" r="0.7" fill="#ff5f4a"/></svg><div class="a" style="left:519.20px;top:385.74px;width:87.20px;text-align:center;line-height:16px;color:#666;">按事件</div><div class="a" style="left:633.75px;top:383.74px;width:31px;height:19.5px;background:#16baaa;border-radius:2px;color:#fff;font-size:11px;line-height:19.5px;text-align:center;">查看</div><div class="a" style="left:692.10px;top:385.74px;width:87.20px;text-align:center;line-height:16px;color:#666;">正常</div><div class="a" style="left:848.70px;top:385.74px;width:69.60px;text-align:center;line-height:16px;color:#666;">暂无</div><div class="a" style="left:918.30px;top:385.74px;width:69.40px;text-align:center;line-height:16px;color:#666;">暂无</div><div class="a" style="left:987.70px;top:385.74px;width:89.80px;text-align:center;line-height:16px;color:#666;">暂无</div></div><!--/MAIN-->
 <div id="hdr">
  <svg style="left:26px;top:16px" width="12" height="10" viewBox="0 0 12 10"><path d="M0 0.8 H12 M5 5 H12" stroke="#333" stroke-width="1.1"/><path d="M0 9.1 H12" stroke="#333" stroke-width="1.5"/><path d="M3.6 2.9 L0.8 5 L3.6 7.1 Z" fill="#333"/></svg>
  <svg style="left:73px;top:15px" width="12" height="11" viewBox="0 0 12 11"><path d="M9.8 2.6 A4.6 4.6 0 1 0 10.8 6" fill="none" stroke="#333" stroke-width="1.4"/><path d="M11.4 0.4 V4.2 H7.6 Z" fill="#333"/></svg>
  <svg style="left:120px;top:16px" width="11" height="10" viewBox="0 0 11 10"><rect x="0" y="1" width="11" height="6.5" fill="#333"/><rect x="4.5" y="0" width="2" height="1.2" fill="#333"/><path d="M5.5 7.5 V9.6 M4 9.6 H7" stroke="#666" stroke-width="0.8"/><path d="M2 5 L4 3 L6 5 L9 2.5" fill="none" stroke="#ddd" stroke-width="0.7"/></svg>
  <svg style="left:165px;top:13.8px" width="13" height="13" viewBox="0 0 13 13"><circle cx="6.5" cy="6.5" r="6.3" fill="#333"/><path d="M8.8 3.2 L4 6 L4.2 9.8 L9 7 Z" fill="#fff"/><path d="M7.8 4.8 L5.2 6.3 L5.3 8.2 L7.9 6.7 Z" fill="#333"/></svg>
  <svg style="left:927px;top:16px" width="14" height="10" viewBox="0 0 14 10"><path d="M7 0.6 C3 0.6 0.6 3 0.6 5.4 C0.6 8 2.4 9.4 4.4 9.4 C5.8 9.4 5.6 8 6.4 7.6 C7.2 7.2 8.4 7.6 9.8 7.8 C12 8 13.4 7 13.4 5 C13.4 2.4 10.6 0.6 7 0.6 Z" fill="none" stroke="#333" stroke-width="1.1"/><circle cx="3.6" cy="4.8" r="0.9" fill="#333"/><circle cx="6" cy="2.9" r="0.9" fill="#333"/><circle cx="9.2" cy="3" r="0.9" fill="#333"/><circle cx="10.3" cy="5.6" r="1.1" fill="#333"/></svg>
  <svg style="left:974px;top:14px" width="13" height="13" viewBox="0 0 13 13"><path d="M7 0.8 H12.2 V6 L5.8 12.4 L0.6 7.2 Z" fill="none" stroke="#333" stroke-width="1.1" stroke-linejoin="round"/><circle cx="9.4" cy="3.6" r="1.1" fill="none" stroke="#333" stroke-width="0.9"/></svg>
  <div class="a" style="left:1021.5px;top:13px;font-size:12.2px;color:#333;line-height:16px;">创始人</div>
  <svg style="left:1062px;top:18px" width="8" height="5" viewBox="0 0 8 5"><path d="M0.5 0.5 L4 4.2 L7.5 0.5" fill="none" stroke="#555" stroke-width="1"/></svg>
 </div>
 <div id="tabs">
  <div class="a" style="left:34.5px;top:0;width:1px;height:35px;background:#f2f2f2;"></div>
  <svg style="left:11.5px;top:11px" width="12" height="12" viewBox="0 0 12 12"><path d="M6 0.6 L0.8 6 L6 11.4 M11.2 0.6 L6 6 L11.2 11.4" fill="none" stroke="#333" stroke-width="1.2"/></svg>
  <svg style="left:48px;top:11px" width="14" height="12" viewBox="0 0 14 12"><path d="M0.6 6 L7 0.6 L13.4 6 M2.6 4.6 V11.4 H11.4 V4.6" fill="none" stroke="#555" stroke-width="1"/></svg>
  <div class="a" style="left:65px;top:9px;color:#333;line-height:16px;">首页</div>
  <div class="a" style="left:101.5px;top:0;width:108.5px;height:35px;background:#f4f4f4;"></div>
  <div class="a" style="left:101.5px;top:0;width:108.5px;height:2px;background:#30343c;"></div>
  <div class="a" style="left:116px;top:9px;color:#333;line-height:16px;">巡查明细表</div>
  <svg style="left:193px;top:14px" width="7" height="6" viewBox="0 0 7 6"><path d="M0.5 0 L6.5 6 M6.5 0 L0.5 6" stroke="#bbb" stroke-width="0.8"/></svg>
  <div class="a" style="left:1022.5px;top:0;width:1px;height:35px;background:#f2f2f2;"></div>
  <svg style="left:1034px;top:11px" width="12" height="12" viewBox="0 0 12 12"><path d="M0.8 0.6 L6 6 L0.8 11.4 M6 0.6 L11.2 6 L6 11.4" fill="none" stroke="#333" stroke-width="1.2"/></svg>
  <div class="a" style="left:1056.5px;top:0;width:1px;height:35px;background:#f2f2f2;"></div>
  <svg style="left:1069px;top:14px" width="11" height="6" viewBox="0 0 11 6"><path d="M0.5 0.5 L5.5 5.5 L10.5 0.5" fill="none" stroke="#333" stroke-width="1.1"/></svg>
 </div>
<div class="a" style="left:0;top:0;width:1278px;height:634px;border:1px solid rgba(160,160,160,.2);border-radius:6px;box-shadow:0 0 0 12px #fff;z-index:50;"></div>
</div>
</body></html>
